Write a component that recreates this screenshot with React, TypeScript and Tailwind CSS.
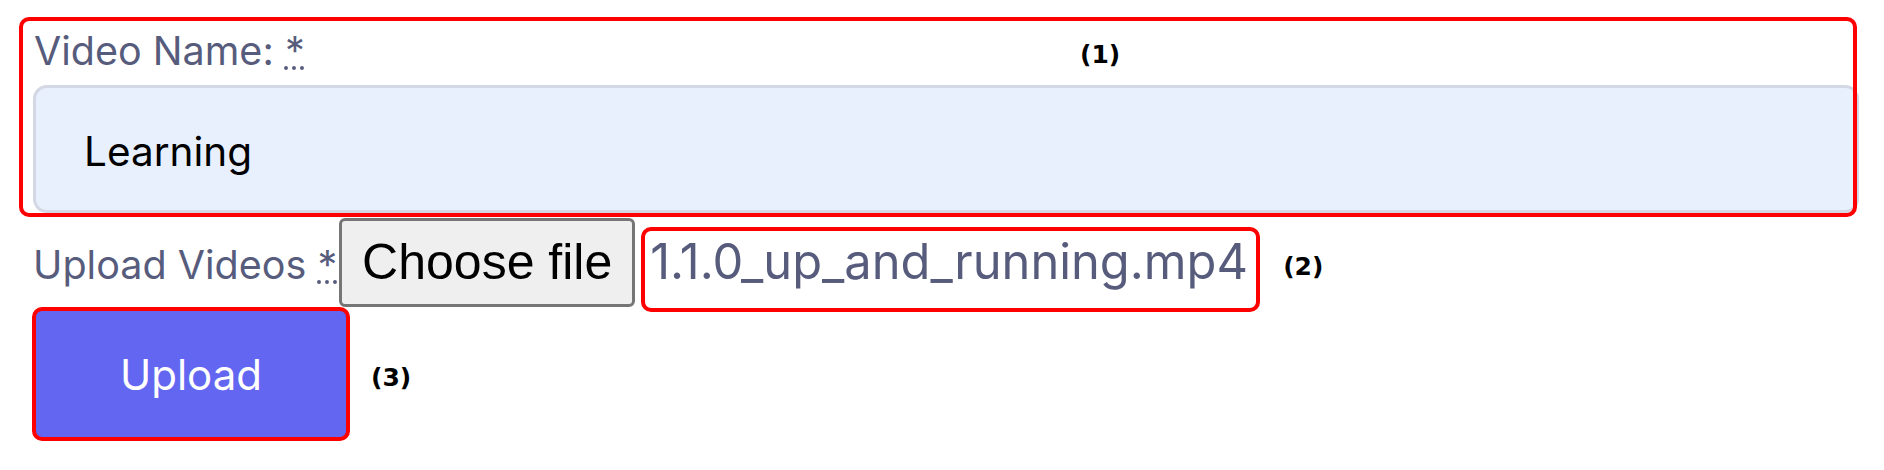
export default function App() {
  return (
    <div className="w-[1884px] h-[470px] bg-white font-['Inter',sans-serif] text-[#575c7d] overflow-hidden pt-[17px]">
      {/* (1) Video name */}
      <div className="relative ml-[19px] w-[1838px] h-[200px] pl-[14px] pt-[4px]">
        <div className="absolute inset-0 z-10 border-4 border-[#ff0000] rounded-[10px] pointer-events-none" />
        <div className="flex items-start h-[60px]">
          <label className="block w-[1046px] shrink-0 ml-[1px] text-[39.5px] leading-[60px] whitespace-nowrap">
            Video Name: <abbr title="required">*</abbr>
          </label>
          <span className="mt-[21px] font-['DejaVu_Sans',sans-serif] font-bold text-[25px] leading-none text-black">
            (1)
          </span>
        </div>
        <div className="mt-[4px] w-[1826px] h-[128px] border-[3px] border-[#d3d8e4] rounded-[14px] bg-[#e8f0fe] pl-[48px] pt-[6px] flex items-center text-[40.5px] text-black">
          Learning
        </div>
      </div>

      {/* (2) Upload videos row */}
      <div className="flex items-start h-[89px] mt-[1px]">
        <label className="ml-[33px] mt-[17px] text-[39.5px] leading-[60px] whitespace-nowrap">
          Upload Videos <abbr title="required">*</abbr>
        </label>
        <div className="ml-[2px] shrink-0 w-[296px] h-[89px] border-[3px] border-[#767676] rounded-[6px] bg-[#efefef] flex items-center justify-center font-['Liberation_Sans',Arial,sans-serif] text-[50px] text-black whitespace-nowrap">
          Choose file
        </div>
        <div className="ml-[6px] mt-[9px] shrink-0 w-[619px] h-[85px] border-4 border-[#ff0000] rounded-[10px] pl-[5px] pt-[1px] text-[48.8px] leading-[60px] whitespace-nowrap overflow-visible">
          1.1.0_up_and_running.mp4
        </div>
        <span className="ml-[23px] mt-[36px] font-['DejaVu_Sans',sans-serif] font-bold text-[25px] leading-none text-black">
          (2)
        </span>
      </div>

      {/* (3) Upload button */}
      <div className="flex items-start">
        <button className="ml-[32px] w-[318px] h-[134px] bg-[#6366f1] border-4 border-[#ff0000] rounded-[10px] text-white text-[42px] flex items-center justify-center">
          Upload
        </button>
        <span className="ml-[21px] mt-[58px] font-['DejaVu_Sans',sans-serif] font-bold text-[25px] leading-none text-black">
          (3)
        </span>
      </div>
    </div>
  );
}
